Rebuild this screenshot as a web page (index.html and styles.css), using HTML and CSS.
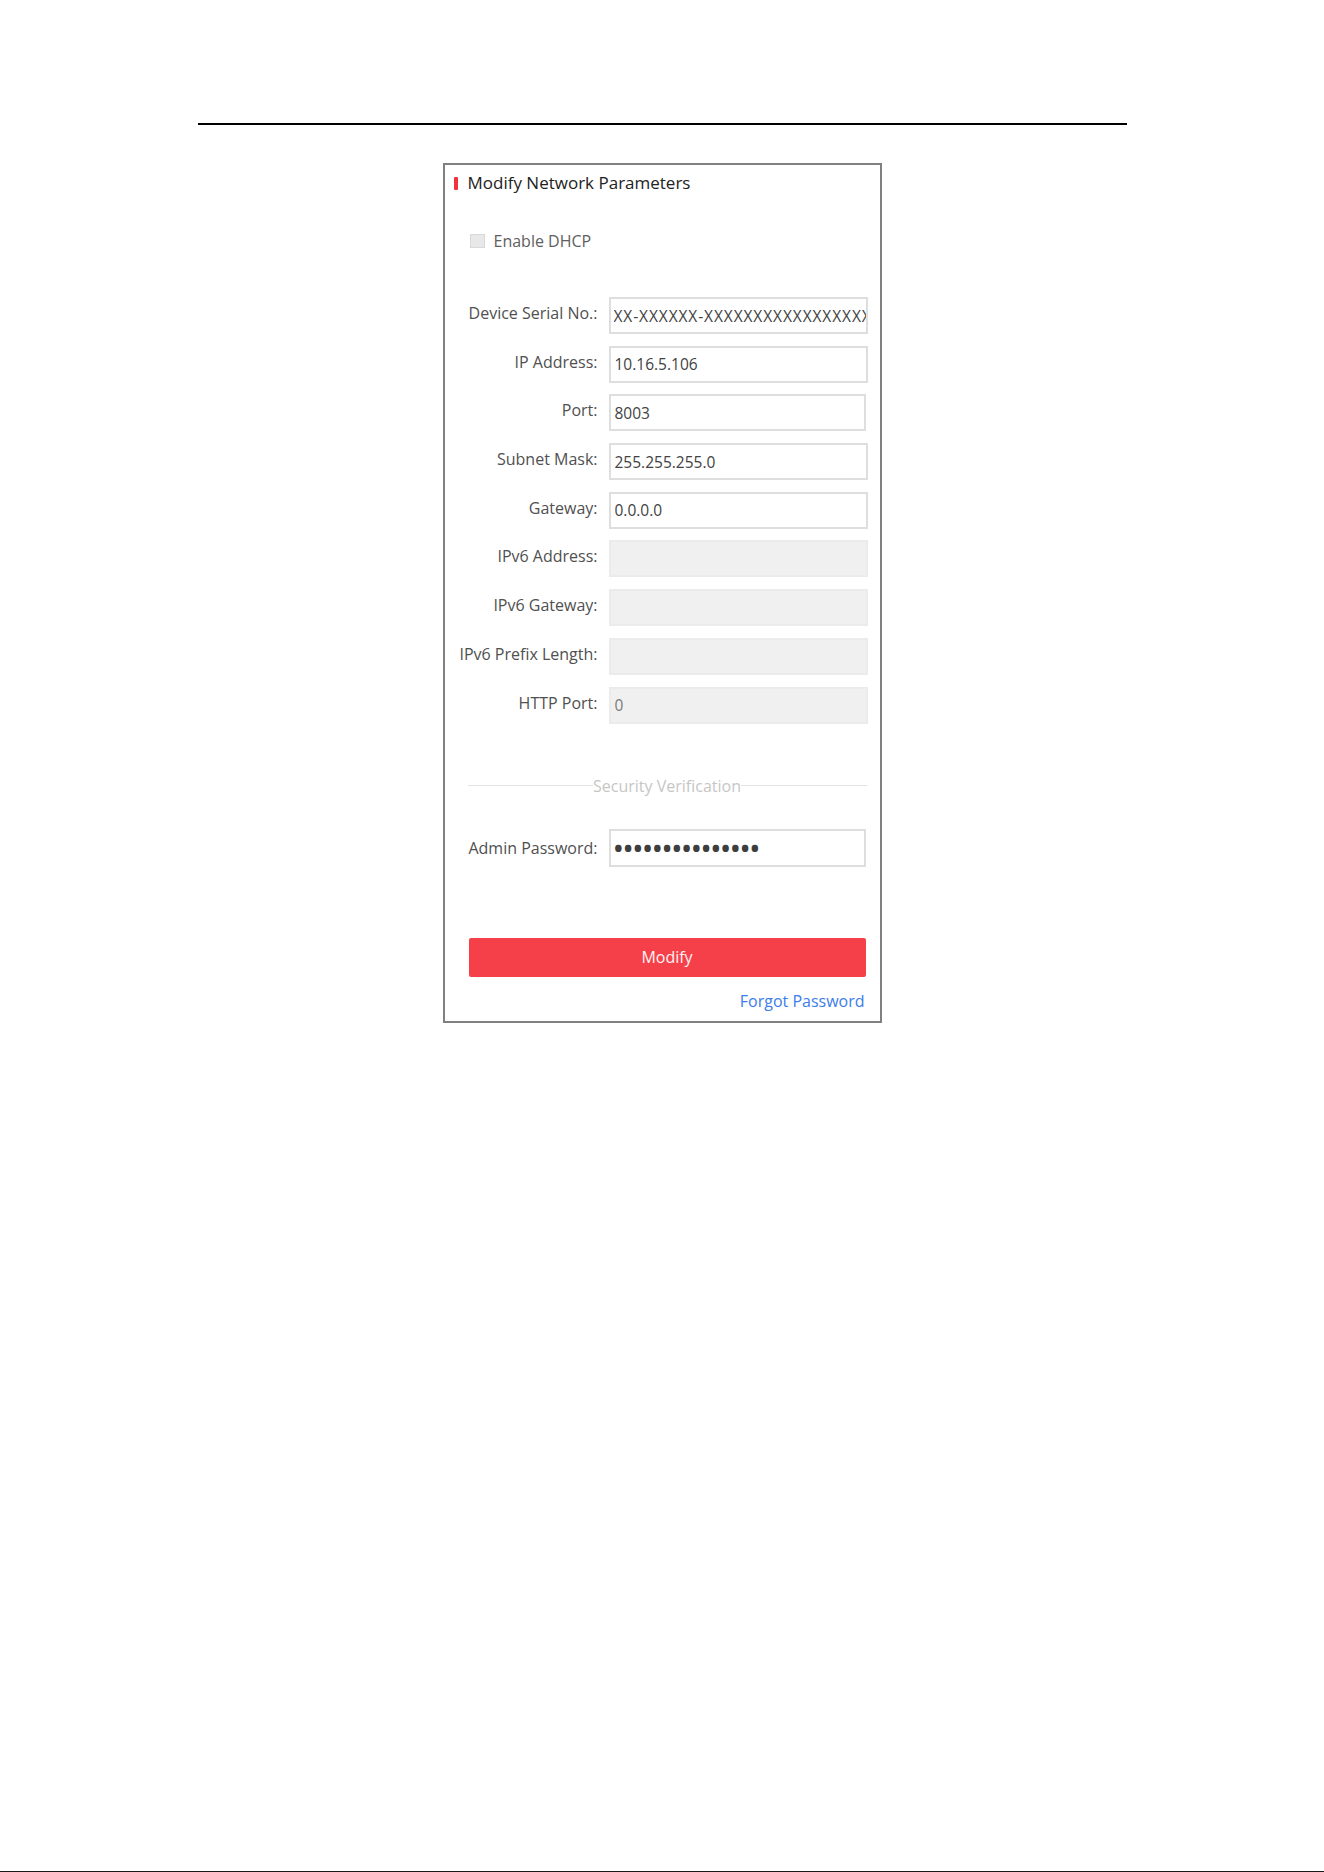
FILE: index.html
```html
<!DOCTYPE html>
<html lang="en">
<head>
<meta charset="utf-8">
<title>Modify Network Parameters</title>
<link rel="stylesheet" href="styles.css">
</head>
<body>
<div class="page">
  <div class="rule"></div>
  <section class="card">
    <header class="card-head">
      <span class="accent"></span>
      <h1 class="title">Modify Network Parameters</h1>
    </header>

    <label class="dhcp">
      <span class="check"></span>
      <span class="dhcp-text">Enable DHCP</span>
    </label>

    <div class="fields">
      <label class="lbl">Device Serial No.:</label>
      <input class="field serial" type="text" readonly value="XX-XXXXXX-XXXXXXXXXXXXXXXXXXXXXXX">

      <label class="lbl">IP Address:</label>
      <input class="field" type="text" readonly value="10.16.5.106">

      <label class="lbl">Port:</label>
      <input class="field port" type="text" readonly value="8003">

      <label class="lbl">Subnet Mask:</label>
      <input class="field" type="text" readonly value="255.255.255.0">

      <label class="lbl">Gateway:</label>
      <input class="field" type="text" readonly value="0.0.0.0">

      <label class="lbl">IPv6 Address:</label>
      <input class="field off" type="text" readonly value="">

      <label class="lbl">IPv6 Gateway:</label>
      <input class="field off" type="text" readonly value="">

      <label class="lbl">IPv6 Prefix Length:</label>
      <input class="field off" type="text" readonly value="">

      <label class="lbl">HTTP Port:</label>
      <input class="field off" type="text" readonly value="0">
    </div>

    <div class="divider">
      <span class="line"></span>
      <span class="divider-text">Security Verification</span>
      <span class="line"></span>
    </div>

    <div class="pwd-row">
      <label class="lbl pwd-lbl">Admin Password:</label>
      <input class="field pwd" type="password" readonly value="abcdefghijklmno">
    </div>

    <button class="btn" type="button">Modify</button>

    <div class="forgot-row">
      <a class="forgot" href="#">Forgot Password</a>
    </div>
  </section>
</div>
</body>
</html>
```

FILE: styles.css
```css
html, body {
  margin: 0;
  padding: 0;
  background: #ffffff;
}

body {
  font-family: "Open Sans", "Noto Sans", "Liberation Sans", sans-serif;
  color: #555555;
}

.page {
  height: 1872px;
  box-sizing: border-box;
  padding-top: 123px;
  border-bottom: 1px solid #1a1a1a;
}

.rule {
  width: 929px;
  height: 2px;
  margin: 0 auto;
  background: #000000;
}

.card {
  width: 439px;
  height: 860px;
  box-sizing: border-box;
  margin: 38px auto 0;
  border: 2px solid #808080;
  background: #ffffff;
}

.card-head {
  display: flex;
  align-items: center;
  padding: 8px 0 0 9px;
  height: 20px;
}

.accent {
  width: 4px;
  height: 13px;
  background: #f2333c;
  margin-right: 10px;
  border-radius: 1px;
}

.title {
  margin: 0;
  font-size: 17px;
  line-height: 20px;
  font-weight: 400;
  color: #222222;
}

.dhcp {
  display: flex;
  align-items: center;
  margin: 38px 0 0 25px;
  height: 20px;
}

.check {
  width: 13px;
  height: 12px;
  border: 1px solid #d8d8d8;
  background: #e8e8e8;
  margin-right: 9px;
}

.dhcp-text {
  font-size: 16px;
  line-height: 20px;
  color: #606060;
}

.fields {
  display: grid;
  grid-template-columns: 153px 259px;
  column-gap: 11px;
  row-gap: 11.7px;
  margin-top: 46px;
}

.lbl {
  font-size: 16px;
  line-height: 20px;
  color: #505050;
  text-align: right;
  align-self: center;
  padding-bottom: 5px;
  white-space: nowrap;
}

.field {
  box-sizing: border-box;
  width: 259px;
  height: 37px;
  margin: 0;
  padding: 0 0 0 4px;
  border: 2px solid #dedede;
  border-radius: 0;
  background: #ffffff;
  font-family: "Open Sans", "Noto Sans", "Liberation Sans", sans-serif;
  font-size: 15.5px;
  color: #424242;
  outline: none;
}

.serial {
  letter-spacing: 0.9px;
  padding-left: 3px;
}

.port {
  width: 257px;
}

.off {
  background: #f0f0f0;
  border-color: #ebebeb;
  color: #7a7a7a;
}

.divider {
  display: flex;
  align-items: center;
  margin: 52px 13px 0 23px;
  height: 20px;
}

.line {
  flex: 1;
  height: 1px;
  background: #e2e2e2;
}

.divider-text {
  font-size: 16px;
  line-height: 20px;
  color: #c6c6c6;
}

.pwd-row {
  display: grid;
  grid-template-columns: 153px 257px;
  column-gap: 11px;
  margin-top: 33px;
}

.pwd-lbl {
  padding-bottom: 0;
}

.pwd {
  width: 257px;
  height: 38px;
  padding-left: 2px;
  font-size: 31px;
  letter-spacing: -1.9px;
  color: #3e3e3e;
}

.btn {
  display: block;
  width: 397px;
  height: 39px;
  margin: 71px 0 0 24px;
  padding: 0;
  border: none;
  border-radius: 2px;
  background: #f5404a;
  color: #fff2f2;
  font-family: "Open Sans", "Noto Sans", "Liberation Sans", sans-serif;
  font-size: 16px;
  cursor: pointer;
}

.forgot-row {
  display: flex;
  justify-content: flex-end;
  margin: 14px 15px 0 0;
}

.forgot {
  font-size: 16px;
  line-height: 20px;
  color: #3c7ceb;
  text-decoration: none;
}
```
